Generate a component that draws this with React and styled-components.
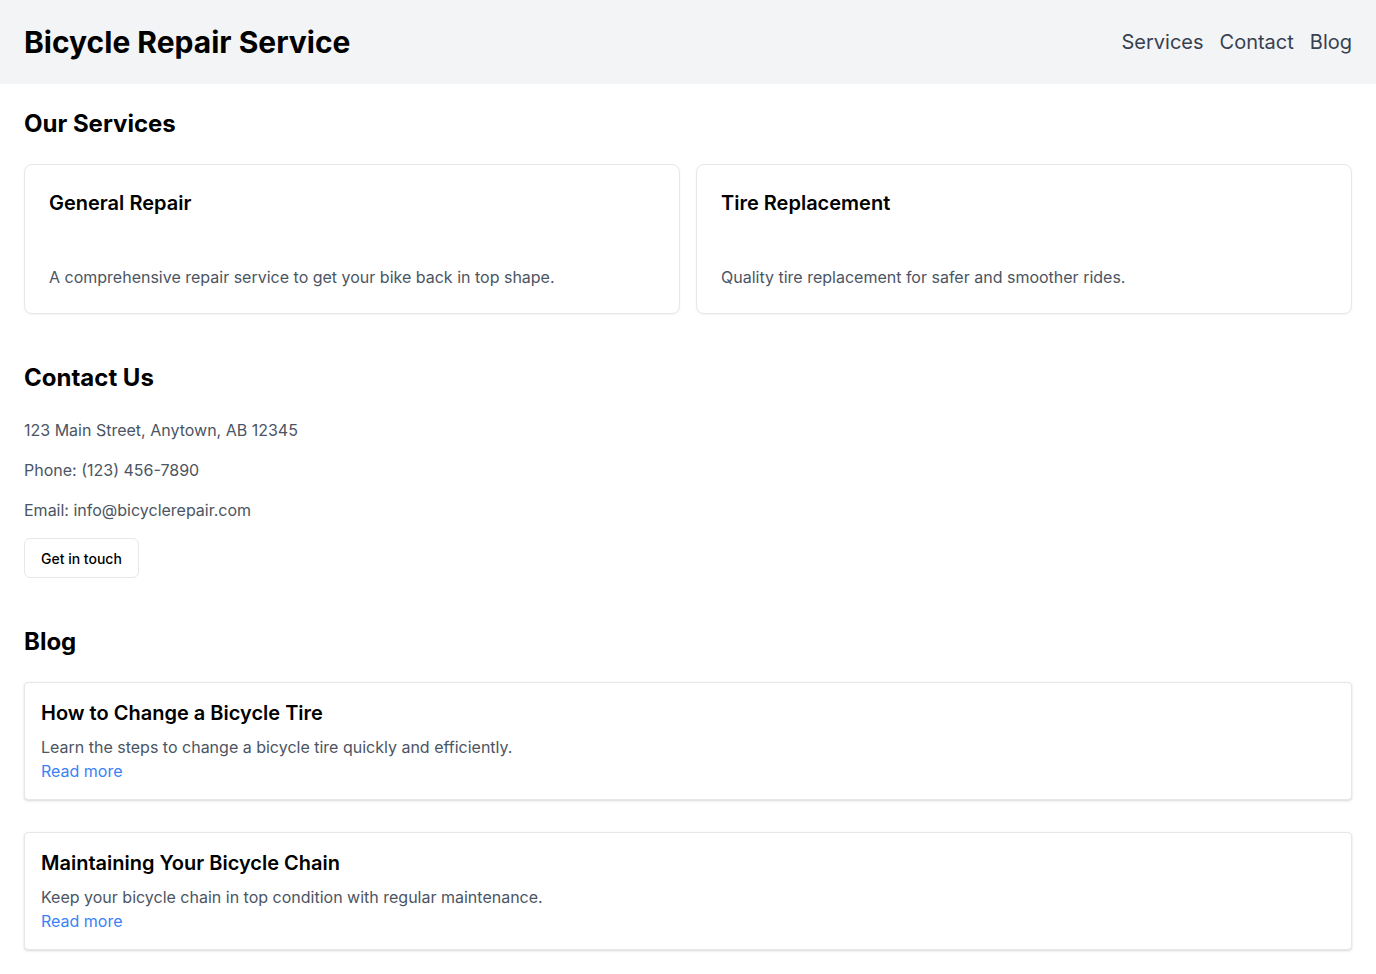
import React from 'react';
import styled, { createGlobalStyle } from 'styled-components';

const Global = createGlobalStyle`
  * { box-sizing: border-box; }
  body {
    margin: 0;
    font-family: Inter, "Noto Sans", sans-serif;
    color: #030712;
    background: #fff;
  }
  h1, h2, h3, p { margin: 0; }
`;

const Header = styled.header`
  display: flex;
  justify-content: space-between;
  align-items: center;
  height: 84px;
  padding: 0 24px;
  background-color: #f3f4f6;
`;

const Title = styled.h1`
  font-size: 30px;
  line-height: 36px;
  font-weight: 700;
  color: #000;
`;

const Nav = styled.nav`
  display: flex;
  gap: 16px;
`;

const NavLink = styled.a`
  font-size: 20px;
  line-height: 28px;
  color: #374151;
  text-decoration: none;
`;

const Main = styled.main`
  display: flex;
  flex-direction: column;
  gap: 48px;
  padding: 24px;
`;

const Section = styled.section`
  display: flex;
  flex-direction: column;
`;

const SectionTitle = styled.h2`
  font-size: 24px;
  line-height: 32px;
  font-weight: 700;
  color: #000;
  margin-bottom: 24px;
`;

const Grid = styled.div`
  display: grid;
  grid-template-columns: 1fr 1fr;
  gap: 16px;
`;

const Card = styled.div`
  border: 1px solid #e5e7eb;
  border-radius: 8px;
  background: #fff;
  box-shadow: 0 1px 2px rgba(0, 0, 0, 0.05);
  padding: 24px;
  display: flex;
  flex-direction: column;
`;

const CardTitle = styled.h3`
  font-size: 20px;
  line-height: 28px;
  font-weight: 600;
  color: #000;
  margin-bottom: 48px;
`;

const Muted = styled.p`
  font-size: 16px;
  line-height: 24px;
  color: #4b5563;
  margin-bottom: ${p => p.$gap || 0}px;
`;

const Button = styled.button`
  align-self: flex-start;
  height: 40px;
  padding: 0 16px;
  border: 1px solid #e5e7eb;
  border-radius: 6px;
  background: #fff;
  font-family: inherit;
  font-size: 14px;
  font-weight: 500;
  color: #000;
  cursor: pointer;
`;

const Posts = styled.div`
  display: flex;
  flex-direction: column;
  gap: 32px;
`;

const Post = styled.article`
  border: 1px solid #e5e7eb;
  border-radius: 4px;
  background: #fff;
  box-shadow: 0 1px 3px rgba(0, 0, 0, 0.1), 0 1px 2px rgba(0, 0, 0, 0.06);
  padding: 16px;
  display: flex;
  flex-direction: column;
`;

const PostTitle = styled.h3`
  font-size: 20px;
  line-height: 28px;
  font-weight: 600;
  color: #000;
  margin-bottom: 8px;
`;

const ReadMore = styled.a`
  font-size: 16px;
  line-height: 24px;
  color: #3b82f6;
  text-decoration: none;
`;

const services = [
  { title: 'General Repair', text: 'A comprehensive repair service to get your bike back in top shape.' },
  { title: 'Tire Replacement', text: 'Quality tire replacement for safer and smoother rides.' },
];

const posts = [
  { title: 'How to Change a Bicycle Tire', text: 'Learn the steps to change a bicycle tire quickly and efficiently.' },
  { title: 'Maintaining Your Bicycle Chain', text: 'Keep your bicycle chain in top condition with regular maintenance.' },
];

export default function App() {
  return (
    <>
      <Global />
      <Header>
        <Title>Bicycle Repair Service</Title>
        <Nav>
          <NavLink href="#services">Services</NavLink>
          <NavLink href="#contact">Contact</NavLink>
          <NavLink href="#blog">Blog</NavLink>
        </Nav>
      </Header>
      <Main>
        <Section id="services">
          <SectionTitle>Our Services</SectionTitle>
          <Grid>
            {services.map(s => (
              <Card key={s.title}>
                <CardTitle>{s.title}</CardTitle>
                <Muted>{s.text}</Muted>
              </Card>
            ))}
          </Grid>
        </Section>
        <Section id="contact">
          <SectionTitle>Contact Us</SectionTitle>
          <Muted $gap={16}>123 Main Street, Anytown, AB 12345</Muted>
          <Muted $gap={16}>Phone: (123) 456-7890</Muted>
          <Muted $gap={16}>Email: info@bicyclerepair.com</Muted>
          <Button>Get in touch</Button>
        </Section>
        <Section id="blog">
          <SectionTitle>Blog</SectionTitle>
          <Posts>
            {posts.map(p => (
              <Post key={p.title}>
                <PostTitle>{p.title}</PostTitle>
                <Muted>{p.text}</Muted>
                <ReadMore href="#">Read more</ReadMore>
              </Post>
            ))}
          </Posts>
        </Section>
      </Main>
    </>
  );
}
